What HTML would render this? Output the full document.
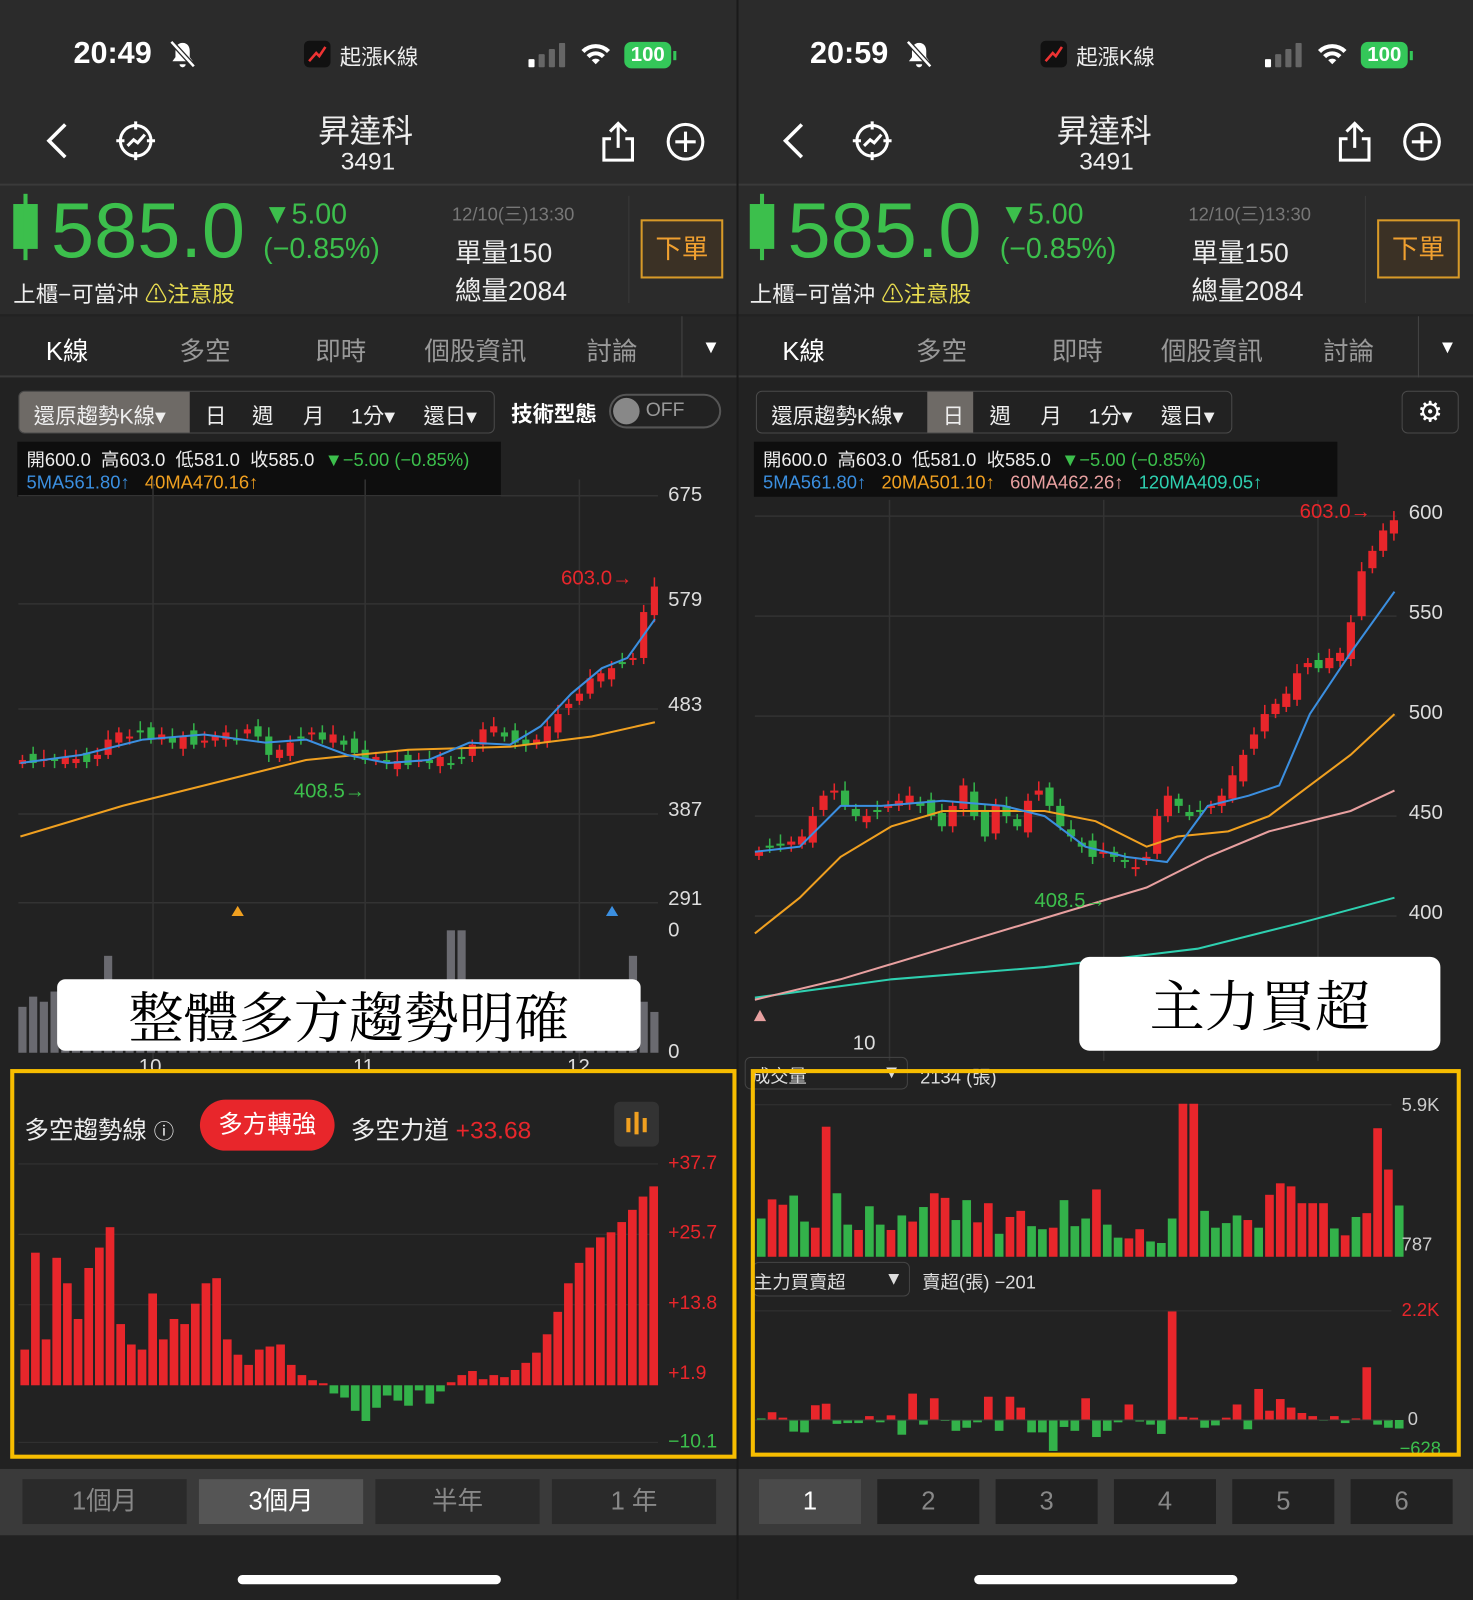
<!DOCTYPE html>
<html><head><meta charset="utf-8">
<style>
*{margin:0;padding:0;box-sizing:border-box}
html,body{width:1473px;height:1600px;overflow:hidden;background:#232323}
#w{position:absolute;left:0;top:0;width:1444px;height:1568px;transform:scale(1.0201);transform-origin:0 0;font-family:"Liberation Sans","Noto Sans CJK TC",sans-serif;color:#fff}
.a{position:absolute;white-space:nowrap}
.p{position:absolute;top:0;width:722px;height:1568px;background:#222;overflow:hidden}
.hd{position:absolute;left:0;top:0;width:722px;height:308px;background:#2b2b2b}
.gr{color:#3cbf4c}
.seg{position:absolute;top:383px;height:42px;border:1px solid #4a4a4a;border-radius:6px}
.seg span{position:absolute;top:8px;font-size:21px;color:#eee}
.btm{position:absolute;left:0;top:1440px;width:722px;height:65px;background:#3a3a3a}
.bb{position:absolute;top:10px;height:44px;background:#2a2a2a;color:#888;font-size:25px;text-align:center;line-height:44px}
.yb{position:absolute;border:4px solid #f7bd00}
.home{position:absolute;top:1544px;width:258px;height:9px;border-radius:5px;background:#fff}
.lab{font-size:20px;color:#ddd}
</style></head><body><div id="w">

<!-- LEFT PANEL -->
<div class="p" style="left:0">
<div class="hd"></div>
<div class="a" style="left:72px;top:36px;font-size:30px;font-weight:bold">20:49</div>
<svg class="a" style="left:165px;top:38px" width="28" height="30" viewBox="0 0 28 30"><path d="M14 4c-5 0-7 4-7 8v6l-3 4h20l-3-4v-6c0-4-2-8-7-8z M11 25a3 3 0 0 0 6 0" fill="#fff"/><line x1="3" y1="3" x2="25" y2="27" stroke="#2b2b2b" stroke-width="5"/><line x1="3" y1="3" x2="25" y2="27" stroke="#fff" stroke-width="2.5"/></svg>
<div class="a" style="left:298px;top:40px;width:26px;height:26px;border-radius:5px;background:#111"><svg width="26" height="26"><path d="M5 20 L12 12 L15 15 L21 6" stroke="#e33" stroke-width="2.5" fill="none"/></svg></div>
<div class="a" style="left:333px;top:40px;font-size:21px;color:#eee">起漲K線</div>
<svg class="a" style="left:518px;top:42px" width="40" height="24"><rect x="0" y="16" width="6" height="8" rx="1" fill="#fff"/><rect x="10" y="11" width="6" height="13" rx="1" fill="#666"/><rect x="20" y="6" width="6" height="18" rx="1" fill="#666"/><rect x="30" y="0" width="6" height="24" rx="1" fill="#666"/></svg>
<svg class="a" style="left:568px;top:40px" width="32" height="26" viewBox="0 0 32 26"><path d="M2 9a20 20 0 0 1 28 0l-3 3a15 15 0 0 0-22 0z M7 14a13 13 0 0 1 18 0l-3 3a8 8 0 0 0-12 0z M12 19a6 6 0 0 1 8 0l-4 4z" fill="#fff"/></svg>
<div class="a" style="left:612px;top:41px;width:46px;height:26px;border-radius:7px;background:#34c759;font-size:20px;font-weight:bold;text-align:center;line-height:26px">100</div>
<div class="a" style="left:660px;top:50px;width:3px;height:9px;background:#34c759"></div>
<svg class="a" style="left:40px;top:118px" width="30" height="40"><path d="M24 4 L8 20 L24 36" stroke="#fff" stroke-width="3.5" fill="none"/></svg>
<svg class="a" style="left:112px;top:117px" width="42" height="42" viewBox="0 0 42 42"><circle cx="21" cy="21" r="15" stroke="#fff" stroke-width="3" fill="none"/><path d="M21 2v8M21 32v8M2 21h8M32 21h8" stroke="#fff" stroke-width="3"/><path d="M13 26l6-6 4 3 7-8" stroke="#fff" stroke-width="3" fill="none"/></svg>
<div class="a" style="left:312px;top:103px;font-size:31px;color:#eee">昇達科</div>
<div class="a" style="left:334px;top:145px;font-size:24px;color:#eee">3491</div>
<svg class="a" style="left:588px;top:118px" width="36" height="42"><path d="M18 3v24M10 11l8-8 8 8" stroke="#fff" stroke-width="3" fill="none"/><path d="M11 18H4v21h28V18h-7" stroke="#fff" stroke-width="3" fill="none"/></svg>
<svg class="a" style="left:652px;top:119px" width="40" height="40"><circle cx="20" cy="20" r="17" stroke="#fff" stroke-width="3" fill="none"/><path d="M20 10v20M10 20h20" stroke="#fff" stroke-width="3"/></svg>
<div class="a" style="left:0;top:180px;width:722px;height:2px;background:#3a3a3a"></div>
<div class="a" style="left:13px;top:200px;width:24px;height:44px;background:#3cbf4c"></div><div class="a" style="left:23px;top:190px;width:4px;height:65px;background:#3cbf4c"></div>
<div class="a gr" style="left:50px;top:184px;font-size:76px;line-height:86px">585.0</div>
<div class="a gr" style="left:258px;top:194px;font-size:28px">▼5.00</div>
<div class="a gr" style="left:258px;top:228px;font-size:28px">(−0.85%)</div>
<div class="a" style="left:443px;top:196px;font-size:18px;color:#777">12/10(三)13:30</div>
<div class="a" style="left:446px;top:228px;font-size:26px;color:#eee">單量150</div>
<div class="a" style="left:446px;top:265px;font-size:26px;color:#eee">總量2084</div>
<div class="a" style="left:616px;top:192px;width:1px;height:105px;background:#3a3a3a"></div>
<div class="a" style="left:628px;top:215px;width:81px;height:58px;border:2px solid #d89a28;background:#3b3125;color:#f0a030;font-size:26px;text-align:center;line-height:54px">下單</div>
<div class="a" style="left:13px;top:271px;font-size:22px;color:#eee">上櫃−可當沖 <span style="color:#e8dc50">⚠注意股</span></div>
<div class="a" style="left:0;top:310px;width:722px;height:60px;background:#262626;border-bottom:2px solid #3a3a3a"></div>
<div class="a" style="left:45px;top:325px;font-size:25px">K線</div>
<div class="a" style="left:176px;top:325px;font-size:25px;color:#999">多空</div>
<div class="a" style="left:309px;top:325px;font-size:25px;color:#999">即時</div>
<div class="a" style="left:416px;top:325px;font-size:25px;color:#999">個股資訊</div>
<div class="a" style="left:575px;top:325px;font-size:25px;color:#999">討論</div>
<div class="a" style="left:668px;top:310px;width:1px;height:60px;background:#444"></div>
<div class="a" style="left:688px;top:330px;font-size:18px">▼</div>
<div class="seg" style="left:18px;width:467px"><div class="a" style="left:0;top:0;width:167px;height:40px;background:#6e6a66;border-radius:5px 0 0 5px"></div><span style="left:14px">還原趨勢K線▾</span><span style="left:182px">日</span><span style="left:228px">週</span><span style="left:278px">月</span><span style="left:325px">1分▾</span><span style="left:396px">還日▾</span></div>
<div class="a" style="left:501px;top:390px;font-size:21px;font-weight:bold">技術型態</div>
<div class="a" style="left:597px;top:386px;width:110px;height:34px;border:2px solid #555;border-radius:17px"><div class="a" style="left:2px;top:2px;width:26px;height:26px;border-radius:13px;background:#888"></div><div class="a" style="left:34px;top:4px;font-size:19px;color:#999">OFF</div></div>
<div class="a" style="left:17px;top:433px;width:474px;height:54px;background:#0e0e0e"></div>
<div class="a" style="left:26px;top:437px;font-size:18px;color:#eee">開600.0 &nbsp;高603.0 &nbsp;低581.0 &nbsp;收585.0 &nbsp;<span class="gr">▼−5.00 (−0.85%)</span></div>
<div class="a" style="left:26px;top:463px;font-size:18px;color:#3b8fe0">5MA561.80↑ &nbsp;&nbsp;<span style="color:#f0a020">40MA470.16↑</span></div>
<div class="a lab" style="left:655px;top:474px">675</div><div class="a lab" style="left:655px;top:577px">579</div><div class="a lab" style="left:655px;top:680px">483</div><div class="a lab" style="left:655px;top:783px">387</div><div class="a lab" style="left:655px;top:870px">291</div><div class="a lab" style="left:655px;top:901px">0</div><div class="a lab" style="left:655px;top:1020px">0</div>
<svg class="a" style="left:0;top:0" width="722" height="1568" id="svl"></svg>
<div class="a" style="left:56px;top:960px;width:572px;height:70px;background:#fff;border-radius:8px;color:#000;font-family:'Noto Serif CJK SC','Liberation Serif',serif;font-size:54px;text-align:center;line-height:70px">整體多方趨勢明確</div>
<div class="a" style="left:136px;top:1035px;font-size:20px;color:#ddd">10</div><div class="a" style="left:346px;top:1035px;font-size:20px;color:#ddd">11</div><div class="a" style="left:556px;top:1035px;font-size:20px;color:#ddd">12</div>
<div class="a" style="left:24px;top:1088px;font-size:24px;color:#eee">多空趨勢線 <span style="font-size:20px">ⓘ</span></div>
<div class="a" style="left:196px;top:1078px;width:132px;height:50px;border-radius:25px;background:#e8262b;font-size:24px;text-align:center;line-height:50px">多方轉強</div>
<div class="a" style="left:344px;top:1088px;font-size:24px;color:#eee">多空力道 <span style="color:#e8262b">+33.68</span></div>
<div class="a" style="left:602px;top:1080px;width:44px;height:44px;border-radius:6px;background:#333"><svg width="44" height="44"><path d="M14 16v14M22 10v22M30 16v14" stroke="#f0a020" stroke-width="4"/></svg></div>
<div class="a" style="left:655px;top:1130px;font-size:19px;color:#e8262b">+37.7</div><div class="a" style="left:655px;top:1198px;font-size:19px;color:#e8262b">+25.7</div><div class="a" style="left:655px;top:1267px;font-size:19px;color:#e8262b">+13.8</div><div class="a" style="left:655px;top:1336px;font-size:19px;color:#e8262b">+1.9</div><div class="a" style="left:655px;top:1403px;font-size:19px;color:#3cbf4c">−10.1</div>
<div class="yb" style="left:10px;top:1048px;width:712px;height:382px"></div>
<div class="btm"><div class="bb" style="left:22px;width:161px">1個月</div><div class="bb" style="left:195px;width:161px;background:#555;color:#fff">3個月</div><div class="bb" style="left:368px;width:161px">半年</div><div class="bb" style="left:541px;width:161px">1 年</div></div>
<div class="home" style="left:233px"></div>
</div>

<!-- RIGHT PANEL -->
<div class="p" style="left:722px;border-left:2px solid #1a1a1a">
<div class="hd"></div>
<div class="a" style="left:70px;top:36px;font-size:30px;font-weight:bold">20:59</div>
<svg class="a" style="left:163px;top:38px" width="28" height="30" viewBox="0 0 28 30"><path d="M14 4c-5 0-7 4-7 8v6l-3 4h20l-3-4v-6c0-4-2-8-7-8z M11 25a3 3 0 0 0 6 0" fill="#fff"/><line x1="3" y1="3" x2="25" y2="27" stroke="#2b2b2b" stroke-width="5"/><line x1="3" y1="3" x2="25" y2="27" stroke="#fff" stroke-width="2.5"/></svg>
<div class="a" style="left:296px;top:40px;width:26px;height:26px;border-radius:5px;background:#111"><svg width="26" height="26"><path d="M5 20 L12 12 L15 15 L21 6" stroke="#e33" stroke-width="2.5" fill="none"/></svg></div>
<div class="a" style="left:331px;top:40px;font-size:21px;color:#eee">起漲K線</div>
<svg class="a" style="left:516px;top:42px" width="40" height="24"><rect x="0" y="16" width="6" height="8" rx="1" fill="#fff"/><rect x="10" y="11" width="6" height="13" rx="1" fill="#666"/><rect x="20" y="6" width="6" height="18" rx="1" fill="#666"/><rect x="30" y="0" width="6" height="24" rx="1" fill="#666"/></svg>
<svg class="a" style="left:566px;top:40px" width="32" height="26" viewBox="0 0 32 26"><path d="M2 9a20 20 0 0 1 28 0l-3 3a15 15 0 0 0-22 0z M7 14a13 13 0 0 1 18 0l-3 3a8 8 0 0 0-12 0z M12 19a6 6 0 0 1 8 0l-4 4z" fill="#fff"/></svg>
<div class="a" style="left:610px;top:41px;width:46px;height:26px;border-radius:7px;background:#34c759;font-size:20px;font-weight:bold;text-align:center;line-height:26px">100</div>
<div class="a" style="left:658px;top:50px;width:3px;height:9px;background:#34c759"></div>
<svg class="a" style="left:38px;top:118px" width="30" height="40"><path d="M24 4 L8 20 L24 36" stroke="#fff" stroke-width="3.5" fill="none"/></svg>
<svg class="a" style="left:110px;top:117px" width="42" height="42" viewBox="0 0 42 42"><circle cx="21" cy="21" r="15" stroke="#fff" stroke-width="3" fill="none"/><path d="M21 2v8M21 32v8M2 21h8M32 21h8" stroke="#fff" stroke-width="3"/><path d="M13 26l6-6 4 3 7-8" stroke="#fff" stroke-width="3" fill="none"/></svg>
<div class="a" style="left:312px;top:103px;font-size:31px;color:#eee">昇達科</div>
<div class="a" style="left:334px;top:145px;font-size:24px;color:#eee">3491</div>
<svg class="a" style="left:586px;top:118px" width="36" height="42"><path d="M18 3v24M10 11l8-8 8 8" stroke="#fff" stroke-width="3" fill="none"/><path d="M11 18H4v21h28V18h-7" stroke="#fff" stroke-width="3" fill="none"/></svg>
<svg class="a" style="left:650px;top:119px" width="40" height="40"><circle cx="20" cy="20" r="17" stroke="#fff" stroke-width="3" fill="none"/><path d="M20 10v20M10 20h20" stroke="#fff" stroke-width="3"/></svg>
<div class="a" style="left:0;top:180px;width:722px;height:2px;background:#3a3a3a"></div>
<div class="a" style="left:11px;top:200px;width:24px;height:44px;background:#3cbf4c"></div><div class="a" style="left:21px;top:190px;width:4px;height:65px;background:#3cbf4c"></div>
<div class="a gr" style="left:48px;top:184px;font-size:76px;line-height:86px">585.0</div>
<div class="a gr" style="left:256px;top:194px;font-size:28px">▼5.00</div>
<div class="a gr" style="left:256px;top:228px;font-size:28px">(−0.85%)</div>
<div class="a" style="left:441px;top:196px;font-size:18px;color:#777">12/10(三)13:30</div>
<div class="a" style="left:444px;top:228px;font-size:26px;color:#eee">單量150</div>
<div class="a" style="left:444px;top:265px;font-size:26px;color:#eee">總量2084</div>
<div class="a" style="left:614px;top:192px;width:1px;height:105px;background:#3a3a3a"></div>
<div class="a" style="left:626px;top:215px;width:81px;height:58px;border:2px solid #d89a28;background:#3b3125;color:#f0a030;font-size:26px;text-align:center;line-height:54px">下單</div>
<div class="a" style="left:11px;top:271px;font-size:22px;color:#eee">上櫃−可當沖 <span style="color:#e8dc50">⚠注意股</span></div>
<div class="a" style="left:0;top:310px;width:722px;height:60px;background:#262626;border-bottom:2px solid #3a3a3a"></div>
<div class="a" style="left:43px;top:325px;font-size:25px">K線</div>
<div class="a" style="left:174px;top:325px;font-size:25px;color:#999">多空</div>
<div class="a" style="left:307px;top:325px;font-size:25px;color:#999">即時</div>
<div class="a" style="left:414px;top:325px;font-size:25px;color:#999">個股資訊</div>
<div class="a" style="left:573px;top:325px;font-size:25px;color:#999">討論</div>
<div class="a" style="left:666px;top:310px;width:1px;height:60px;background:#444"></div>
<div class="a" style="left:686px;top:330px;font-size:18px">▼</div>
<div class="seg" style="left:17px;width:467px"><div class="a" style="left:167px;top:0;width:45px;height:40px;background:#6e6a66"></div><span style="left:14px">還原趨勢K線▾</span><span style="left:182px">日</span><span style="left:228px">週</span><span style="left:278px">月</span><span style="left:325px">1分▾</span><span style="left:396px">還日▾</span></div>
<div class="a" style="left:650px;top:383px;width:56px;height:42px;border:1px solid #4a4a4a;border-radius:6px;font-size:28px;text-align:center;line-height:40px">⚙</div>
<div class="a" style="left:15px;top:433px;width:572px;height:54px;background:#0e0e0e"></div>
<div class="a" style="left:24px;top:437px;font-size:18px;color:#eee">開600.0 &nbsp;高603.0 &nbsp;低581.0 &nbsp;收585.0 &nbsp;<span class="gr">▼−5.00 (−0.85%)</span></div>
<div class="a" style="left:24px;top:463px;font-size:18px;color:#3b8fe0">5MA561.80↑ &nbsp;&nbsp;<span style="color:#f0a020">20MA501.10↑</span> &nbsp;&nbsp;<span style="color:#e8a0a0">60MA462.26↑</span> &nbsp;&nbsp;<span style="color:#2ed0b0">120MA409.05↑</span></div>
<div class="a lab" style="left:657px;top:492px">600</div><div class="a lab" style="left:657px;top:590px">550</div><div class="a lab" style="left:657px;top:688px">500</div><div class="a lab" style="left:657px;top:786px">450</div><div class="a lab" style="left:657px;top:884px">400</div>
<svg class="a" style="left:0;top:0" width="722" height="1568" id="svr"></svg>
<div class="a" style="left:334px;top:938px;width:354px;height:92px;background:#fff;border-radius:10px;color:#000;font-family:'Noto Serif CJK SC','Liberation Serif',serif;font-size:54px;text-align:center;line-height:92px">主力買超</div>
<div class="a" style="left:112px;top:1012px;font-size:20px;color:#ddd">10</div>
<div class="a" style="left:6px;top:1036px;width:160px;height:32px;border:1px solid #444;border-radius:6px;font-size:18px;color:#ddd;padding:4px 6px">成交量<span style="float:right">▼</span></div>
<div class="a" style="left:178px;top:1042px;font-size:18px;color:#ddd">2134 (張)</div>
<div class="a" style="left:14px;top:1237px;width:154px;height:34px;border:1px solid #444;border-radius:6px;font-size:18px;color:#ddd;padding:5px 0">主力買賣超<span style="float:right;margin-right:6px">▼</span></div>
<div class="a" style="left:180px;top:1243px;font-size:18px;color:#ddd">賣超(張) −201</div>
<div class="a" style="left:650px;top:1073px;font-size:18px;color:#ccc">5.9K</div><div class="a" style="left:650px;top:1210px;font-size:18px;color:#ccc">787</div>
<div class="a" style="left:650px;top:1274px;font-size:18px;color:#e8262b">2.2K</div><div class="a" style="left:656px;top:1381px;font-size:18px;color:#ccc">0</div><div class="a" style="left:648px;top:1410px;font-size:18px;color:#3cbf4c">−628</div>
<div class="yb" style="left:12px;top:1048px;width:696px;height:380px"></div>
<div class="btm" style="background:#3a3a3a"><div class="bb" style="left:20px;width:100px;background:#4a4a4a;color:#fff">1</div><div class="bb" style="left:136px;width:100px;background:#222">2</div><div class="bb" style="left:252px;width:100px;background:#222">3</div><div class="bb" style="left:368px;width:100px;background:#222">4</div><div class="bb" style="left:484px;width:100px;background:#222">5</div><div class="bb" style="left:600px;width:100px;background:#222">6</div></div>
<div class="home" style="left:231px"></div>
</div>
</div>
<script>
var NS="http://www.w3.org/2000/svg",R="#e8262b",G="#33b24a";
function el(s,t,a){var e=document.createElementNS(NS,t);for(var k in a)e.setAttribute(k,a[k]);s.insertBefore(e,s.firstChild===null?null:null);s.appendChild(e);return e;}
function grid(s,ys,xs,x0,x1,y0,y1){ys.forEach(function(y){el(s,"line",{x1:x0,x2:x1,y1:y,y2:y,stroke:"#333","stroke-width":1.5})});xs.forEach(function(x){el(s,"line",{x1:x,x2:x,y1:y0,y2:y1,stroke:"#333","stroke-width":1.5})});}
function candles(s,ys,x0,dx,w){var prev=ys[0]+4;ys.forEach(function(c,i){var x=x0+i*dx,o=prev,up=c<o,t=Math.min(o,c),h=Math.max(2,Math.abs(o-c));var col=up?R:G;el(s,"line",{x1:x,x2:x,y1:t-5-(i%3)*2,y2:t+h+4+(i%4),stroke:col,"stroke-width":1.5});el(s,"rect",{x:x-w/2,y:t,width:w,height:h,fill:col});prev=c+((i%5)-2)*3;});}
function line(s,pts,c){el(s,"polyline",{points:pts,fill:"none",stroke:c,"stroke-width":2});}
function txt(s,x,y,t,c,sz){var e=el(s,"text",{x:x,y:y,fill:c,"font-size":sz,"font-family":"Liberation Sans"});e.textContent=t;}
// LEFT
var L=document.getElementById("svl");
grid(L,[486,592,695,798,885],[150,358,568],18,645,470,1040);
var ly=[745,748,744,746,742,744,747,740,725,718,722,716,725,720,728,722,730,726,722,718,725,715,722,740,735,728,722,718,725,720,730,738,745,742,748,746,750,745,748,742,748,744,730,715,712,722,728,730,725,712,700,690,680,665,660,655,650,645,600,575];
candles(L,ly,22,10.5,7);
line(L,"20,820 120,790 200,770 300,745 400,735 500,732 580,722 642,708","#f0a020");
line(L,"20,748 80,740 140,725 200,720 260,728 300,725 340,740 380,748 420,745 460,728 500,730 530,712 560,680 590,655 615,645 642,607","#3b8fe0");
txt(L,550,573,"603.0→","#e8262b",20);txt(L,288,782,"408.5→","#3cbf4c",20);
el(L,"polygon",{points:"227,898 233,888 239,898",fill:"#f0a020"});el(L,"polygon",{points:"594,898 600,888 606,898",fill:"#3b8fe0"});
var lv=[45,55,50,60,40,45,30,35,95,40,55,30,45,40,35,50,30,45,60,40,35,30,40,50,45,40,35,45,40,50,45,35,40,30,45,40,35,45,50,40,120,120,45,50,40,55,45,40,35,45,60,50,40,55,45,40,50,95,50,40];
lv.forEach(function(h,i){el(L,"rect",{x:18+i*10.5,y:1032-h,width:8,height:h,fill:"#6a6a70"})});
el(L,"line",{x1:18,x2:645,y1:1141,y2:1141,stroke:"#333"});el(L,"line",{x1:18,x2:645,y1:1210,y2:1210,stroke:"#333"});el(L,"line",{x1:18,x2:645,y1:1279,y2:1279,stroke:"#333"});el(L,"line",{x1:18,x2:645,y1:1414,y2:1414,stroke:"#333"});
var ib=[35,130,45,125,100,65,115,135,155,60,40,35,90,45,65,60,80,100,105,45,30,20,35,38,40,20,10,5,2,-8,-12,-25,-35,-22,-10,-15,-20,-5,-18,-6,3,10,14,6,10,8,15,22,32,50,72,100,120,135,145,150,160,172,185,195];
ib.forEach(function(v,i){var x=20+i*10.45;el(L,"rect",{x:x,y:v>0?1358-v:1358,width:8.5,height:Math.abs(v),fill:v>0?R:G})});
// RIGHT
var Rr=document.getElementById("svr");
grid(Rr,[506,604,702,800,898],[148,358,568],16,645,490,1040);
var ry=[835,830,828,825,820,800,780,775,790,800,800,795,790,785,780,790,800,810,790,770,800,820,790,800,810,785,775,790,810,820,830,840,835,840,845,850,840,800,780,790,800,795,790,780,760,740,720,700,690,680,660,650,655,645,640,610,560,540,520,510];
candles(Rr,ry,20,10.55,8);
line(Rr,"16,978 150,960 300,948 450,930 550,905 643,880","#2ed0b0");
line(Rr,"16,980 100,960 200,930 300,900 400,870 460,840 520,815 600,795 643,775","#e8a0a0");
line(Rr,"16,915 60,880 100,840 150,810 200,795 300,795 350,805 400,830 430,820 480,815 520,800 560,770 600,740 643,700","#f0a020");
line(Rr,"16,835 60,830 100,790 140,790 200,785 260,790 300,800 340,830 380,840 420,845 460,790 500,780 530,770 560,700 600,640 643,580","#3b8fe0");
txt(Rr,550,508,"603.0→","#e8262b",20);txt(Rr,290,889,"408.5→","#3cbf4c",20);
el(Rr,"polygon",{points:"15,1001 21,990 27,1001",fill:"#e8a0a0"});
el(Rr,"line",{x1:16,x2:640,y1:1083,y2:1083,stroke:"#333"});el(Rr,"line",{x1:16,x2:640,y1:1285,y2:1285,stroke:"#333"});
var vv=[[50,0],[75,1],[68,1],[80,0],[46,0],[38,1],[170,1],[83,0],[42,0],[35,1],[66,0],[42,0],[35,1],[54,0],[46,1],[65,0],[83,1],[77,1],[48,0],[74,0],[45,1],[70,1],[30,0],[52,1],[60,1],[40,0],[36,0],[38,1],[74,0],[40,0],[50,0],[88,1],[42,0],[25,0],[24,1],[36,1],[20,0],[18,0],[50,0],[200,1],[200,1],[60,0],[38,0],[44,0],[54,0],[48,1],[38,0],[81,1],[96,1],[92,1],[70,1],[70,1],[70,1],[37,0],[28,1],[52,0],[57,1],[168,1],[114,1],[67,0]];
vv.forEach(function(v,i){var x=18+i*10.6;el(Rr,"rect",{x:x,y:1232-v[1]*0+ -v[0]*0.75,width:8.5,height:v[0]*0.75,fill:v[1]?R:G})});
var mf=[[2,0],[10,1],[3,1],[-15,0],[-16,0],[19,1],[21,1],[-5,0],[-4,0],[-4,0],[5,1],[-3,0],[6,1],[-19,0],[34,1],[-6,0],[28,1],[0,0],[-14,0],[-10,0],[-3,0],[30,1],[-14,0],[30,1],[16,1],[-16,0],[-16,0],[-40,0],[-9,0],[-14,0],[28,1],[-22,0],[-14,0],[-3,0],[20,1],[-2,0],[-6,0],[-18,0],[140,1],[4,1],[3,1],[-10,0],[-7,0],[3,1],[20,1],[-12,0],[40,1],[12,1],[27,1],[16,1],[9,1],[5,1],[-1,0],[5,1],[-4,0],[2,1],[68,1],[-6,0],[-10,0],[-11,0]];
mf.forEach(function(v,i){var x=18+i*10.6,h=Math.abs(v[0])*0.76||1;el(Rr,"rect",{x:x,y:v[0]>0?1392-h:1392,width:8.5,height:h,fill:v[1]?R:G})});
el(Rr,"line",{x1:16,x2:640,y1:1392,y2:1392,stroke:"#3a3a3a"});
</script>
</body></html>
